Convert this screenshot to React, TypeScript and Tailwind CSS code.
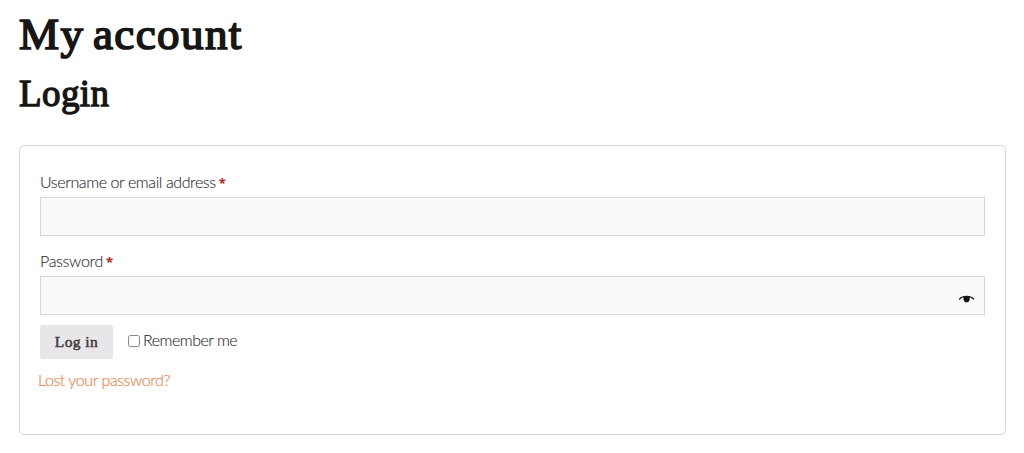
import { useState } from "react";

function Required() {
  return <span className="ml-[3px] font-['Open_Sans',sans-serif] text-[13px] font-bold leading-none text-[#b52a2a]">*</span>;
}

const fieldClass =
  "block h-[39px] w-full border border-[#d6d6da] bg-[#fafafa] px-3 text-[15px] outline-none";

export default function App() {
  const [showPassword, setShowPassword] = useState(false);
  const [remember, setRemember] = useState(false);

  return (
    <main className="h-[453px] w-full overflow-hidden bg-white pl-[19px] pr-[18px] pt-[9px] font-['Lato',sans-serif] text-[#2b292b]">
      <h1 className="h-[51px] whitespace-nowrap font-['Liberation_Serif',serif] text-[45px] font-normal leading-[50px] tracking-[1.4px] text-[#161616] [-webkit-text-stroke:1.7px_#161616] [word-spacing:-4px]">
        My account
      </h1>
      <h2 className="mt-[13px] h-[42px] whitespace-nowrap font-['Liberation_Serif',serif] text-[37px] font-normal leading-[42px] tracking-[0.4px] text-[#161616] [-webkit-text-stroke:1.3px_#161616]">
        Login
      </h2>

      <form
        className="mt-[30px] h-[290px] rounded-[5px] border border-[#d6d5d8] px-[20px] pt-[25px]"
        onSubmit={(e) => e.preventDefault()}
      >
        <label htmlFor="username" className="block h-[26px] whitespace-nowrap text-[16px] font-light leading-[22px] tracking-[-0.4px] [-webkit-text-stroke:0.1px_currentColor]">
          Username or email address
          <Required />
        </label>
        <input id="username" type="text" className={fieldClass} />

        <label htmlFor="password" className="mt-[14px] block h-[26px] whitespace-nowrap text-[16px] font-light leading-[22px] tracking-[-0.3px] [-webkit-text-stroke:0.1px_currentColor]">
          Password
          <Required />
        </label>
        <div className="relative">
          <input id="password" type={showPassword ? "text" : "password"} className={fieldClass} />
          <button
            type="button"
            aria-label="Show password"
            onClick={() => setShowPassword(!showPassword)}
            className="absolute right-[10px] top-[19px]"
          >
            <svg width="16" height="9" viewBox="0 0 16 9" className="block">
              <path d="M0.5 4C3.6 0.6 11.6 0.6 14.7 4" fill="none" stroke="#222" strokeWidth="1.2" strokeLinecap="round" />
              <path d="M4.4 1.7C6 1.1 9.2 1.1 10.8 1.7C11 5 10 7.3 7.6 7.3C5.2 7.3 4.2 5 4.4 1.7Z" fill="#111" />
            </svg>
          </button>
        </div>

        <div className="mt-[10px] flex h-[34px]">
          <button
            type="submit"
            className="h-[34px] w-[73px] whitespace-nowrap rounded-[3px] bg-[#e8e6e9] font-['Liberation_Serif',serif] text-[15.5px] font-normal tracking-[0.4px] text-[#3d3a3c] [-webkit-text-stroke:0.5px_#3d3a3c]"
          >
            Log in
          </button>
          <label className="ml-[15px] flex h-[31px] items-center whitespace-nowrap text-[16px] font-light tracking-[-0.5px] [-webkit-text-stroke:0.1px_currentColor]">
            <input
              type="checkbox"
              checked={remember}
              onChange={() => setRemember(!remember)}
              className="mr-[3px] h-[12px] w-[12px] appearance-none rounded-[2.5px] border border-[#8b8585] bg-white checked:bg-[#4b484a]"
            />
            <span className="-mt-[1px]">Remember me</span>
          </label>
        </div>

        <a href="#" className="-ml-[2px] mt-[10px] block w-fit whitespace-nowrap text-[16px] font-light leading-[22px] tracking-[-0.42px] text-[#ee8048] [-webkit-text-stroke:0.15px_currentColor]">
          Lost your password?
        </a>
      </form>
    </main>
  );
}
